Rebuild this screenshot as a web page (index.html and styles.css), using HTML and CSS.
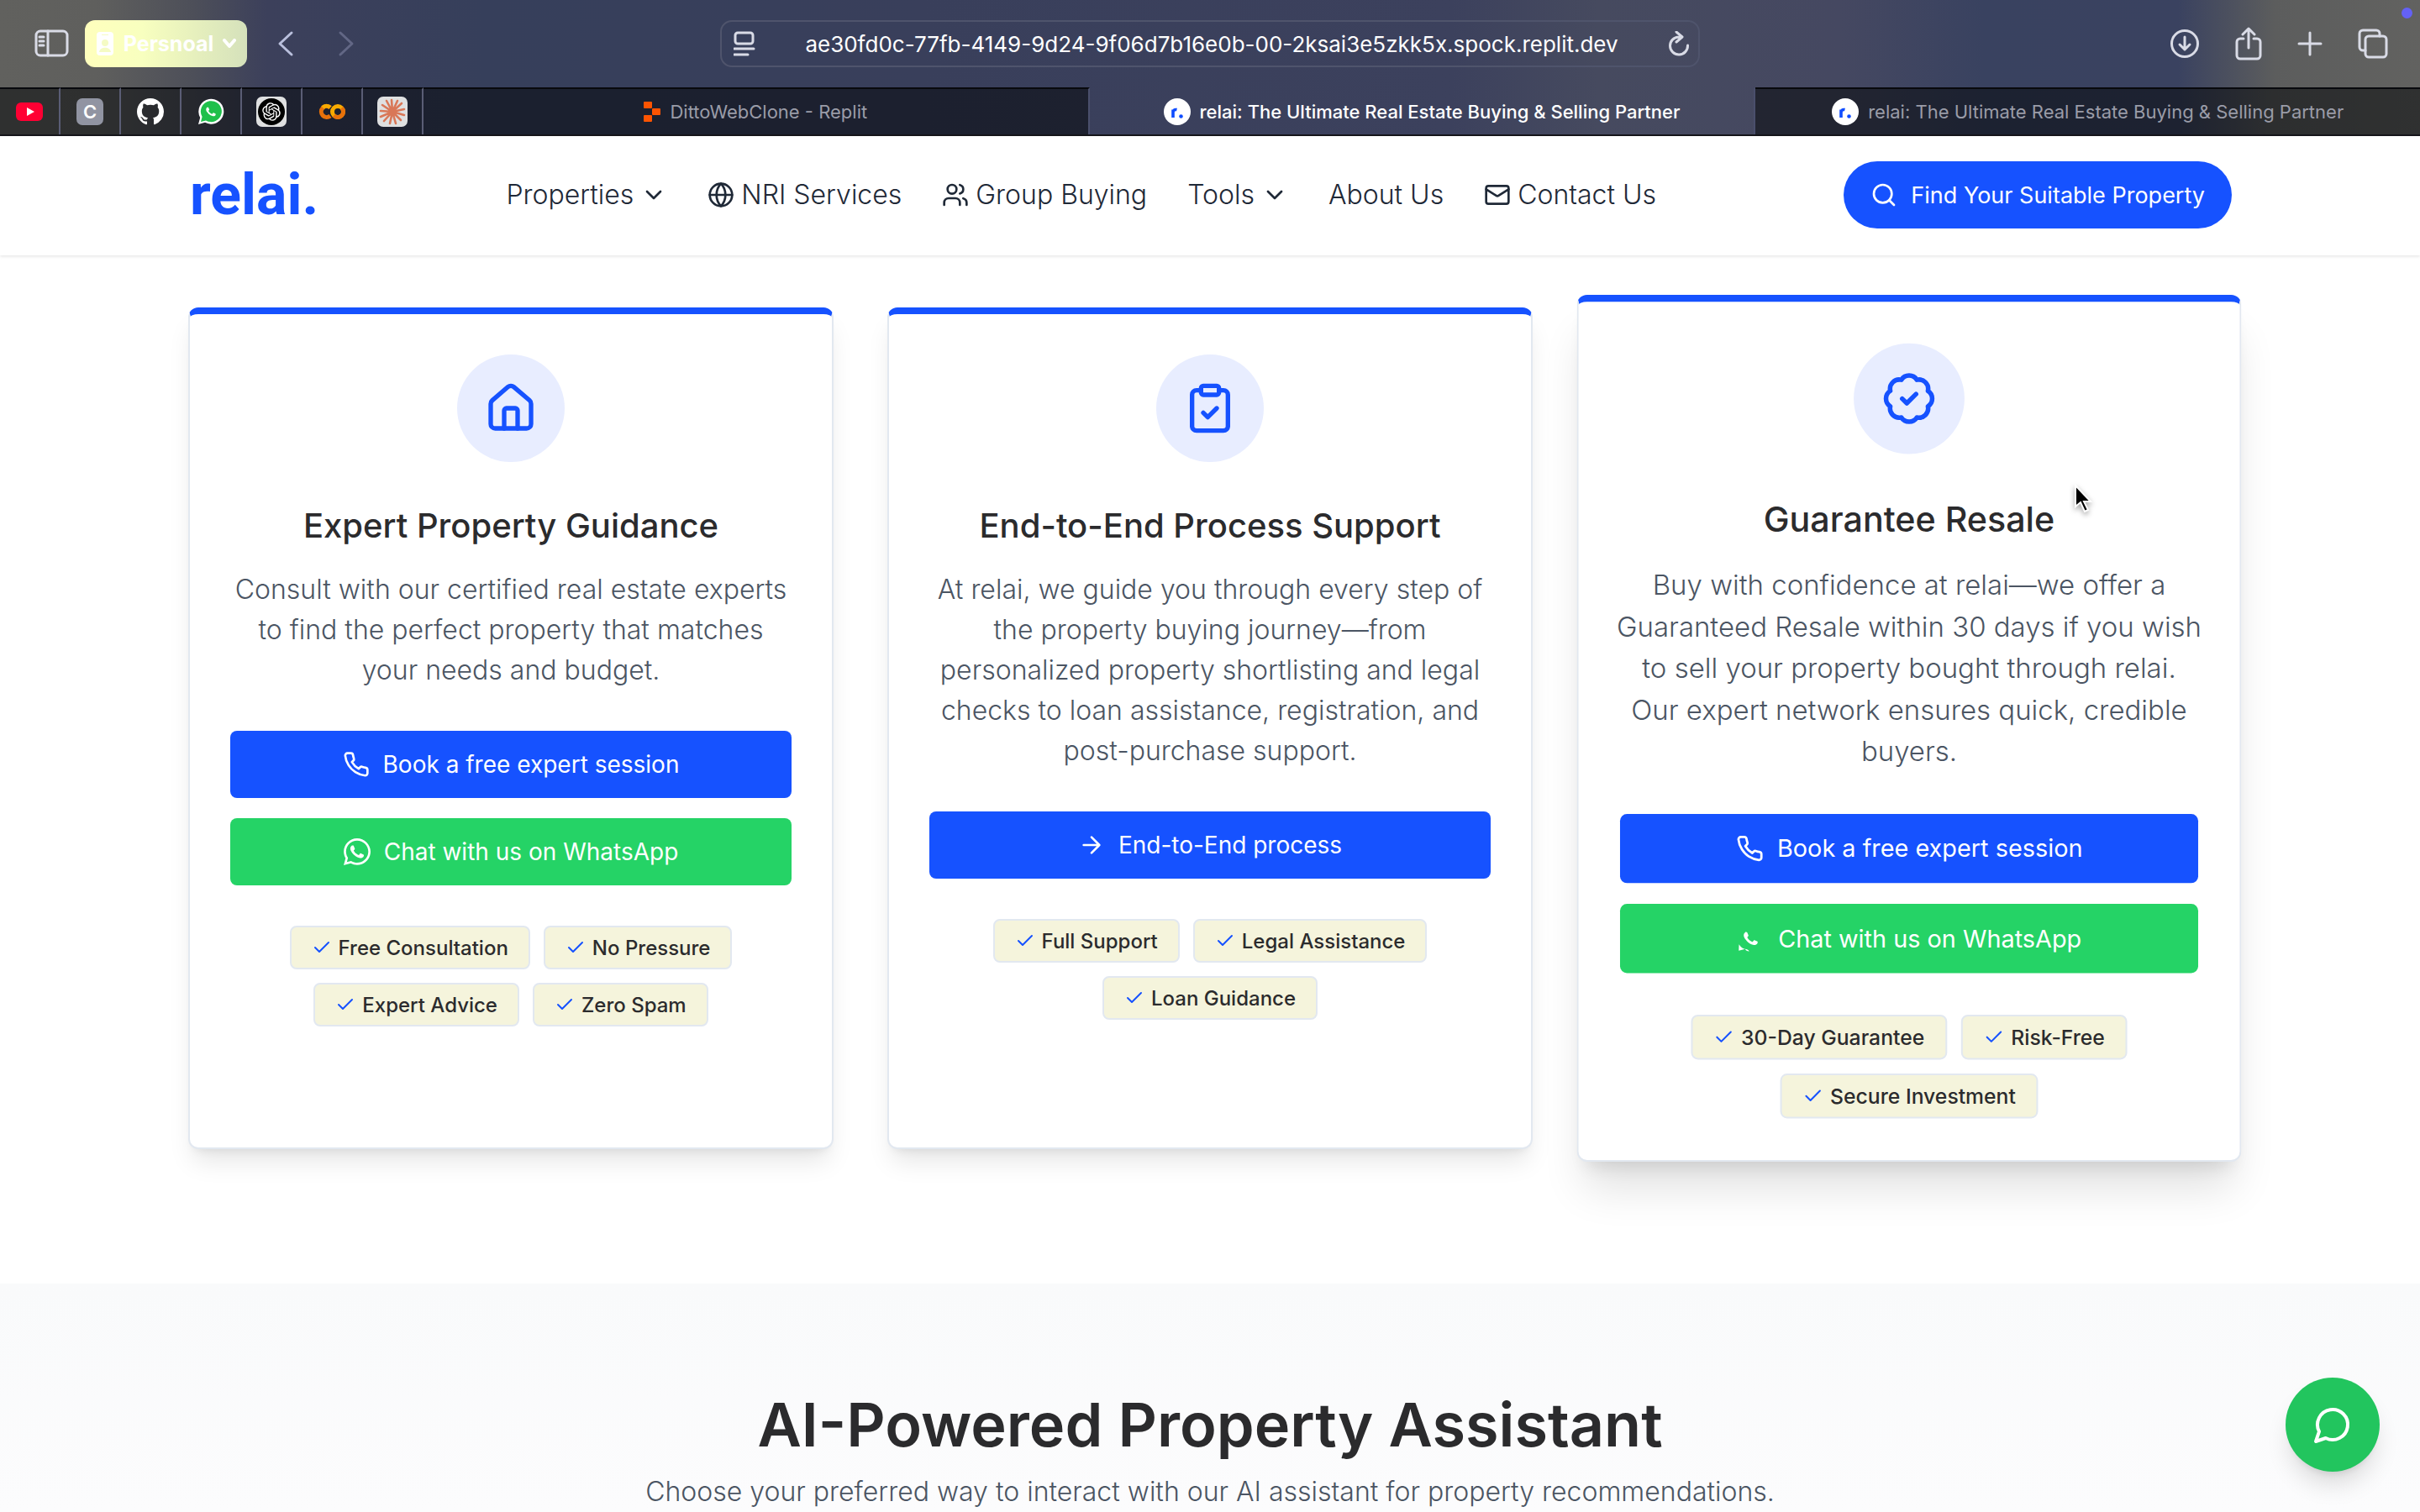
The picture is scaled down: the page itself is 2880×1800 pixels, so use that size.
FILE: index.html
```html
<!DOCTYPE html>
<html lang="en">
<head>
<meta charset="utf-8">
<title>relai: The Ultimate Real Estate Buying &amp; Selling Partner</title>
<link rel="stylesheet" href="styles.css">
</head>
<body>
<svg class="sprite" aria-hidden="true">
  <symbol id="chevron" viewBox="0 0 24 24"><path d="m6 9 6 6 6-6"/></symbol>
  <symbol id="check" viewBox="0 0 24 24"><path d="M20 6 9 17l-5-5"/></symbol>
  <symbol id="phone" viewBox="0 0 24 24"><path d="M22 16.92v3a2 2 0 0 1-2.18 2 19.79 19.79 0 0 1-8.63-3.07 19.5 19.5 0 0 1-6-6 19.79 19.79 0 0 1-3.07-8.67A2 2 0 0 1 4.11 2h3a2 2 0 0 1 2 1.72 12.84 12.84 0 0 0 .7 2.81 2 2 0 0 1-.45 2.11L8.09 9.91a16 16 0 0 0 6 6l1.27-1.27a2 2 0 0 1 2.11-.45 12.84 12.84 0 0 0 2.81.7A2 2 0 0 1 22 16.92z"/></symbol>
  <symbol id="handset" viewBox="0 0 448 512"><path d="M325.1 300.5c-5.5-2.8-32.8-16.2-37.9-18-5.1-1.9-8.800-2.800-12.500 2.800-3.700 5.600-14.300 18-17.600 21.800-3.200 3.700-6.500 4.200-12 1.400-32.600-16.300-54-29.100-75.500-66-5.700-9.800 5.700-9.100 16.300-30.300 1.800-3.700.9-6.900-.5-9.700-1.400-2.800-12.500-30.100-17.100-41.200-4.500-10.800-9.100-9.300-12.500-9.300-3.200-.2-6.900-.2-10.600-.2-3.700 0-9.700 1.400-14.800 6.900-5.100 5.600-19.400 19-19.400 46.300 0 27.300 19.900 53.700 22.600 57.400 2.800 3.700 39.100 59.700 94.800 83.800 35.200 15.200 49 16.500 66.600 13.900 10.700-1.600 32.800-13.400 37.400-26.400 4.600-13 4.600-24.100 3.200-26.400-1.300-2.500-5-3.900-10.500-6.600z"/></symbol>
  <symbol id="relai-mark" viewBox="0 0 32 32"><circle cx="16" cy="16" r="16" fill="#fff"/><path d="M11 23V13.500M11 17c0-2.500 1.800-4 4.500-3.400" fill="none" stroke="#0f4dff" stroke-width="3.600"/><circle cx="20.500" cy="21.500" r="2.300" fill="#0f4dff"/></symbol>
</svg>

<header class="browser">
  <div class="toolbar">
    <div class="tools-left">
      <button class="tool" aria-label="Show sidebar"><svg width="42" height="34" viewBox="0 0 42 34"><rect x="2" y="2" width="37" height="29" rx="5"/><path d="M16 2v29M6 9h5M6 14h5M6 19h5"/></svg></button>
      <button class="profile"><svg width="22" height="30" viewBox="0 0 22 30"><rect x="1" y="1" width="20" height="28" rx="4" fill="#fff"/><circle cx="11" cy="14" r="4" fill="#f5fbc4"/><path d="M4 25c1-7 13-7 14 0zM7 4h8v1H7z" fill="#f5fbc4"/></svg>Persnoal<svg class="line" width="16" height="12" viewBox="0 0 16 12"><path d="m2 2 6 7 6-7"/></svg></button>
      <button class="tool back" aria-label="Back"><svg width="20" height="32" viewBox="0 0 20 32"><path d="M17 3 3 16l14 13"/></svg></button>
      <button class="tool forward" aria-label="Forward"><svg width="20" height="32" viewBox="0 0 20 32"><path d="m3 3 14 13L3 29"/></svg></button>
    </div>
    <div class="address">
      <svg class="tool" width="26" height="30" viewBox="0 0 26 30"><rect x="2" y="2" width="21" height="13" rx="3"/><path d="M1 21h23M1 28h16"/></svg>
      <input type="text" aria-label="Address" value="ae30fd0c-77fb-4149-9d24-9f06d7b16e0b-00-2ksai3e5zkk5x.spock.replit.dev">
      <button class="tool" aria-label="Reload"><svg width="26" height="30" viewBox="0 0 26 30"><path d="M13 7A10.500 10.500 0 1 0 23.500 17M10 1l7 6-7 6"/></svg></button>
    </div>
    <div class="tools-right">
      <button class="tool" aria-label="Downloads"><svg width="36" height="36" viewBox="0 0 36 36"><circle cx="18" cy="18" r="15.500"/><path d="M18 10v15M12 19l6 6 6-6"/></svg></button>
      <button class="tool" aria-label="Share"><svg width="34" height="40" viewBox="0 0 34 40"><path d="M11 14H7a4 4 0 0 0-4 4v16a4 4 0 0 0 4 4h20a4 4 0 0 0 4-4V18a4 4 0 0 0-4-4h-4M17 25V3M10 9l7-7 7 7"/></svg></button>
      <button class="tool" aria-label="New tab"><svg width="30" height="30" viewBox="0 0 30 30"><path d="M15 2v26M2 15h26"/></svg></button>
      <button class="tool" aria-label="Tab overview"><svg width="38" height="38" viewBox="0 0 38 38"><rect x="10" y="10" width="25" height="25" rx="4"/><path d="M10 27H7a4 4 0 0 1-4-4V7a4 4 0 0 1 4-4h16a4 4 0 0 1 4 4v3"/></svg></button>
    </div>
    <span class="dot"></span>
  </div>
  <nav class="tabs" aria-label="Tabs">
    <a class="pin" href="#" aria-label="YouTube"><svg width="32" height="22" viewBox="0 0 32 22"><rect width="32" height="22" rx="6" fill="#ff0033"/><path d="m13 6 9 5-9 5z" fill="#fff"/></svg></a>
    <a class="pin" href="#"><span class="letter">C</span></a>
    <a class="pin" href="#" aria-label="GitHub"><svg width="32" height="32" viewBox="0 0 16 16"><path fill="#fff" d="M8 0C3.580 0 0 3.580 0 8c0 3.540 2.290 6.530 5.470 7.590.4.070.55-.17.55-.38 0-.19-.01-.82-.01-1.490-2.010.37-2.530-.49-2.690-.94-.09-.23-.48-.94-.82-1.130-.28-.15-.68-.52-.01-.53.63-.01 1.080.58 1.230.82.72 1.210 1.870.87 2.330.66.07-.52.28-.87.51-1.070-1.780-.2-3.640-.89-3.640-3.950 0-.87.31-1.590.82-2.150-.08-.2-.36-1.020.08-2.120 0 0 .67-.21 2.200.82.64-.18 1.320-.27 2-.27s1.360.09 2 .27c1.530-1.040 2.200-.82 2.200-.82.44 1.100.16 1.920.08 2.120.51.56.82 1.270.82 2.150 0 3.070-1.870 3.750-3.650 3.950.29.25.54.73.54 1.480 0 1.070-.01 1.930-.01 2.200 0 .21.15.46.55.38A8.010 8.010 0 0 0 16 8c0-4.420-3.580-8-8-8z"/></svg></a>
    <a class="pin" href="#" aria-label="WhatsApp"><svg width="32" height="32" viewBox="0 0 32 32"><path d="M1 31l2.200-8A15 15 0 1 1 9 28.800z" fill="#fff"/><path d="M4 28l1.600-6A12.500 12.500 0 1 1 10 26.400z" fill="#1fc04b"/><use href="#handset" x="4" y="3" width="24" height="26" fill="#fff"/></svg></a>
    <a class="pin" href="#" aria-label="ChatGPT"><span class="tile"><svg width="36" height="36" viewBox="0 0 36 36"><circle cx="18" cy="18" r="16" fill="#000"/><g transform="translate(7.200 7.200) scale(.9)"><path fill="#fff" d="M22.282 9.821a5.985 5.985 0 0 0-.516-4.911 6.046 6.046 0 0 0-6.510-2.900A6.065 6.065 0 0 0 4.981 4.182a5.985 5.985 0 0 0-3.998 2.900 6.046 6.046 0 0 0 .743 7.097 5.980 5.980 0 0 0 .511 4.911 6.051 6.051 0 0 0 6.515 2.900A5.985 5.985 0 0 0 13.260 24a6.056 6.056 0 0 0 5.772-4.206 5.989 5.989 0 0 0 3.998-2.900 6.056 6.056 0 0 0-.748-7.073zm-9.022 12.608a4.476 4.476 0 0 1-2.876-1.041l.142-.080 4.778-2.758a.795.795 0 0 0 .393-.681v-6.737l2.020 1.169a.071.071 0 0 1 .038.052v5.583a4.504 4.504 0 0 1-4.495 4.494zm-9.661-4.125a4.471 4.471 0 0 1-.535-3.014l.142.085 4.783 2.758a.771.771 0 0 0 .781 0l5.843-3.369v2.332a.080.080 0 0 1-.033.062L9.740 19.950a4.499 4.499 0 0 1-6.141-1.646zM2.341 7.896a4.485 4.485 0 0 1 2.366-1.973V11.600a.766.766 0 0 0 .388.677l5.814 3.354-2.020 1.169a.076.076 0 0 1-.071 0l-4.830-2.787A4.504 4.504 0 0 1 2.341 7.872zm16.596 3.856L13.104 8.364 15.119 7.200a.076.076 0 0 1 .071 0l4.830 2.791a4.494 4.494 0 0 1-.677 8.104v-5.677a.790.790 0 0 0-.407-.667zm2.011-3.023l-.142-.085-4.774-2.782a.776.776 0 0 0-.785 0L9.409 9.230V6.897a.066.066 0 0 1 .028-.062l4.830-2.787a4.499 4.499 0 0 1 6.680 4.660zM8.307 12.863l-2.020-1.164a.080.080 0 0 1-.038-.057V6.074a4.499 4.499 0 0 1 7.376-3.454l-.142.081L8.704 5.459a.795.795 0 0 0-.393.681zm1.098-2.365l2.602-1.500 2.607 1.500v2.999l-2.597 1.500-2.607-1.500Z"/></g></svg></span></a>
    <a class="pin" href="#" aria-label="Colab"><svg width="32" height="20" viewBox="0 0 32 20" fill="none" stroke-width="5"><path d="M14 5a6.500 6.500 0 1 0 0 10" stroke="#e8710a"/><path d="M5 5a6.500 6.500 0 0 1 9 0" stroke="#f9ab00"/><circle cx="23" cy="10" r="6.500" stroke="#f9ab00"/><path d="M18.400 14.600a6.500 6.500 0 0 0 9.200-9.200" stroke="#e8710a"/></svg></a>
    <a class="pin" href="#" aria-label="Claude"><span class="tile"><svg width="36" height="36" viewBox="0 0 36 36" stroke="#d97757" stroke-width="2.600" stroke-linecap="round"><path d="M18 18 17 4M18 18l6-13M18 18 29 8M18 18l14-3M18 18l14 4M18 18l10 10M18 18l4 14M18 18l-3 14M18 18 8 29M18 18 4 24M18 18 4 17M18 18 6 10M18 18 11 5"/></svg></span></a>
    <a class="tab" href="#"><svg width="20" height="24" viewBox="0 0 20 24" fill="#fd5402"><rect width="10" height="8" rx="1"/><rect x="10" y="8" width="10" height="8" rx="1"/><rect y="16" width="10" height="8" rx="1"/></svg>DittoWebClone - Replit</a>
    <a class="tab active" href="#"><svg width="32" height="32"><use href="#relai-mark"/></svg>relai: The Ultimate Real Estate Buying &amp; Selling Partner</a>
    <a class="tab" href="#"><svg width="32" height="32"><use href="#relai-mark"/></svg>relai: The Ultimate Real Estate Buying &amp; Selling Partner</a>
  </nav>
</header>

<div class="page">
  <header class="site-header">
    <a class="logo" href="#">relai.</a>
    <nav class="menu" aria-label="Main">
      <a href="#">Properties<svg class="icon"><use href="#chevron"/></svg></a>
      <a href="#"><svg class="icon" viewBox="0 0 24 24"><circle cx="12" cy="12" r="10"/><path d="M12 2a14.500 14.500 0 0 0 0 20 14.500 14.500 0 0 0 0-20M2 12h20"/></svg>NRI Services</a>
      <a href="#"><svg class="icon" viewBox="0 0 24 24"><path d="M16 21v-2a4 4 0 0 0-4-4H6a4 4 0 0 0-4 4v2"/><circle cx="9" cy="7" r="4"/><path d="M22 21v-2a4 4 0 0 0-3-3.870M16 3.130a4 4 0 0 1 0 7.750"/></svg>Group Buying</a>
      <a href="#">Tools<svg class="icon"><use href="#chevron"/></svg></a>
      <a href="#">About Us</a>
      <a href="#"><svg class="icon" viewBox="0 0 24 24"><rect x="2" y="4" width="20" height="16" rx="2"/><path d="m22 7-8.970 5.700a1.940 1.940 0 0 1-2.060 0L2 7"/></svg>Contact Us</a>
    </nav>
    <button class="find"><svg class="icon" viewBox="0 0 24 24"><circle cx="11" cy="11" r="8"/><path d="m21 21-4.300-4.300"/></svg>Find Your Suitable Property</button>
  </header>

  <main>
    <section class="services">
      <article class="card">
        <div class="badge"><svg viewBox="0 0 24 24"><path d="M15 21v-8a1 1 0 0 0-1-1h-4a1 1 0 0 0-1 1v8"/><path d="M3 10a2 2 0 0 1 .709-1.528l7-5.999a2 2 0 0 1 2.582 0l7 5.999A2 2 0 0 1 21 10v9a2 2 0 0 1-2 2H5a2 2 0 0 1-2-2z"/></svg></div>
        <h3>Expert Property Guidance</h3>
        <p>Consult with our certified real estate experts<br>to find the perfect property that matches<br>your needs and budget.</p>
        <div class="actions">
          <button class="action"><svg class="icon"><use href="#phone"/></svg>Book a free expert session</button>
          <button class="action whatsapp"><svg class="solid" viewBox="0 32 448 448"><path fill-rule="evenodd" d="M380.900 97.100C339 55.100 283.200 32 223.900 32c-122.400 0-222 99.600-222 222 0 39.100 10.200 77.300 29.600 111L0 480l117.700-30.900c32.400 17.700 68.900 27 106.100 27h.1c122.300 0 224.100-99.600 224.100-222 0-59.300-25.200-115-67.100-157zm-157 341.600c-33.200 0-65.700-8.900-94-25.700l-6.700-4-69.800 18.300L72 359.200l-4.400-7c-18.500-29.400-28.200-63.300-28.200-98.200 0-101.700 82.800-184.500 184.600-184.500 49.300 0 95.600 19.200 130.400 54.100 34.800 34.900 56.200 81.200 56.100 130.500 0 101.800-84.900 184.600-186.600 184.600z"/><use href="#handset" width="448" height="512"/></svg>Chat with us on WhatsApp</button>
        </div>
        <ul class="tags">
          <li><svg><use href="#check"/></svg>Free Consultation</li>
          <li><svg><use href="#check"/></svg>No Pressure</li>
          <li><svg><use href="#check"/></svg>Expert Advice</li>
          <li><svg><use href="#check"/></svg>Zero Spam</li>
        </ul>
      </article>

      <article class="card">
        <div class="badge"><svg viewBox="0 0 24 24"><rect x="8" y="2" width="8" height="4" rx="1"/><path d="M16 4h2a2 2 0 0 1 2 2v14a2 2 0 0 1-2 2H6a2 2 0 0 1-2-2V6a2 2 0 0 1 2-2h2"/><path d="m9 14 2 2 4-4"/></svg></div>
        <h3>End-to-End Process Support</h3>
        <p>At relai, we guide you through every step of<br>the property buying journey—from<br>personalized property shortlisting and legal<br>checks to loan assistance, registration, and<br>post-purchase support.</p>
        <div class="actions">
          <button class="action"><svg class="icon" viewBox="0 0 24 24"><path d="M5 12h14M12 5l7 7-7 7"/></svg>End-to-End process</button>
        </div>
        <ul class="tags">
          <li><svg><use href="#check"/></svg>Full Support</li>
          <li><svg><use href="#check"/></svg>Legal Assistance</li>
          <li><svg><use href="#check"/></svg>Loan Guidance</li>
        </ul>
      </article>

      <article class="card raised">
        <div class="badge"><svg viewBox="0 0 24 24"><path d="M3.850 8.620a4 4 0 0 1 4.780-4.770 4 4 0 0 1 6.740 0 4 4 0 0 1 4.780 4.780 4 4 0 0 1 0 6.740 4 4 0 0 1-4.770 4.780 4 4 0 0 1-6.750 0 4 4 0 0 1-4.780-4.770 4 4 0 0 1 0-6.760Z"/><path d="m9 12 2 2 4-4"/></svg></div>
        <h3>Guarantee Resale</h3>
        <p>Buy with confidence at relai—we offer a<br>Guaranteed Resale within 30 days if you wish<br>to sell your property bought through relai.<br>Our expert network ensures quick, credible<br>buyers.</p>
        <div class="actions">
          <button class="action"><svg class="icon"><use href="#phone"/></svg>Book a free expert session</button>
          <button class="action whatsapp"><svg class="solid" viewBox="0 32 448 448"><use href="#handset" width="448" height="512"/><path d="M34 350 30 452l104-28c-34-6-70-26-100-74zM134 424c30 2 50 12 66 38-30 2-56-12-66-38z"/></svg>Chat with us on WhatsApp</button>
        </div>
        <ul class="tags">
          <li><svg><use href="#check"/></svg>30-Day Guarantee</li>
          <li><svg><use href="#check"/></svg>Risk-Free</li>
          <li><svg><use href="#check"/></svg>Secure Investment</li>
        </ul>
      </article>
    </section>

    <section class="assistant">
      <h2>AI-Powered Property Assistant</h2>
      <p>Choose your preferred way to interact with our AI assistant for property recommendations.</p>
    </section>
  </main>
</div>

<button class="chat" aria-label="Chat"><svg viewBox="0 0 24 24"><path d="M7.900 20A9 9 0 1 0 4 16.100L2 22Z"/></svg></button>
<svg class="pointer" width="24" height="36" viewBox="0 0 24 36"><path d="M3 2v25l6-5 5 11 4-2-5-10h8z" fill="#000" stroke="#fff" stroke-width="2"/></svg>
</body>
</html>
```
FILE: styles.css
```css
:root {
  --blue: #1652ff;
  --green: #25d366;
  --ink: #1f2937;
  --muted: #4b5563;
  --line: #e2e8f0;
  --gutter: 224px;
}

* { box-sizing: border-box; }

body {
  margin: 0;
  height: 100vh;
  display: flex;
  flex-direction: column;
  overflow: hidden;
  font-family: Inter, "Liberation Sans", sans-serif;
  color: var(--ink);
  background: #fff;
}

h2, h3, p, ul { margin: 0; padding: 0; }
a { color: inherit; text-decoration: none; }
button { border: 0; padding: 0; background: none; font: inherit; color: inherit; }
svg { flex: none; display: block; }
.sprite { position: absolute; width: 0; height: 0; }

.icon {
  width: 32px;
  height: 32px;
  fill: none;
  stroke: currentColor;
  stroke-width: 2;
  stroke-linecap: round;
  stroke-linejoin: round;
}

/* Browser window */
.browser {
  flex: none;
  background: linear-gradient(90deg, #61615e 0, #5f5f5d 4%, #4d4f59 8%, #3c405b 11%, #363f5b 20%, #393f5b 38%, #3c415d 60%, #464a5f 66%, #454861 76%, #394260 82%, #3a4260 90%, #5c5d5d 94%, #626260 100%);
}

.toolbar {
  position: relative;
  display: grid;
  grid-template-columns: 1fr 1166px 1fr;
  align-items: center;
  height: 104px;
}

.tools-left, .tools-right { display: flex; align-items: center; }
.tools-left { padding-left: 41px; gap: 18px; }
.tools-right { justify-content: flex-end; padding-right: 37px; gap: 41px; }

.tool { fill: none; stroke: #d9dbe6; stroke-width: 3; stroke-linecap: round; stroke-linejoin: round; }
.back { margin-left: 18px; stroke: #b9bfdc; }
.forward { margin-left: 34px; stroke: #626785; }

.profile {
  display: flex;
  align-items: center;
  justify-content: center;
  gap: 11px;
  width: 193px;
  height: 56px;
  border-radius: 12px;
  background: linear-gradient(90deg, #ffffbd, #f8ffbf 35%, #d5e1bb);
  color: #fff;
  font-size: 25px;
  font-weight: 700;
}
.line { fill: none; stroke: #fff; stroke-width: 4; stroke-linecap: round; stroke-linejoin: round; }

.address {
  display: flex;
  align-items: center;
  height: 56px;
  padding: 0 10px 0 14px;
  border: 2px solid #4f546c;
  border-radius: 14px;
}
.address input {
  flex: 1;
  min-width: 0;
  border: 0;
  background: none;
  color: #fff;
  font: 400 26px Inter, sans-serif;
  text-align: center;
}

.dot {
  position: absolute;
  top: 9px;
  right: 9px;
  width: 13px;
  height: 13px;
  border-radius: 50%;
  background: #6461f5;
}

.tabs {
  display: flex;
  height: 58px;
  border-bottom: 2px solid #15151a;
}
.pin, .tab {
  display: flex;
  align-items: center;
  justify-content: center;
  border-top: 2px solid #08090d;
  background: rgb(4 6 8 / 53%);
}
.pin { width: 72px; border-right: 2px solid #5a5d75; }
.tab {
  flex: 1;
  gap: 11px;
  border-right: 2px solid #4a4f6c;
  color: #9a9ca8;
  font-size: 22px;
}
.tab:last-child { border-right: 0; }
.active { border-top-color: transparent; background: none; color: #fff; font-weight: 500; }
.letter, .tile { display: grid; place-items: center; border-radius: 7px; }
.letter { width: 32px; height: 32px; background: #9194a2; color: #fff; font-size: 22px; font-weight: 600; }
.tile { width: 36px; height: 36px; background: #dfe0e1; }

/* Site */
.page {
  flex: 1;
  min-height: 0;
  display: flex;
  flex-direction: column;
  overflow: hidden;
}

.site-header {
  display: flex;
  align-items: center;
  justify-content: space-between;
  padding: 30px var(--gutter) 32px;
  box-shadow: 0 1px 4px rgb(0 0 0 / 12%);
}
.logo {
  font: 700 68px/80px Roboto, sans-serif;
  color: var(--blue);
  padding-left: 2px;
}
.menu { display: flex; gap: 48px; font-size: 32px; font-weight: 300; line-height: 48px; }
.menu a { display: flex; align-items: center; gap: 8px; }
.find {
  display: flex;
  align-items: center;
  gap: 16px;
  height: 80px;
  padding: 0 32px;
  border-radius: 40px;
  background: var(--blue);
  color: #fff;
  font-size: 27px;
}

main { flex: 1; display: flex; flex-direction: column; }

.services {
  display: grid;
  grid-template-columns: repeat(3, minmax(0, 1fr));
  gap: 64px;
  padding: 62px var(--gutter) 160px;
}
.card {
  display: flex;
  flex-direction: column;
  align-items: center;
  padding: 48px;
  border: 2px solid var(--line);
  border-top: 8px solid var(--blue);
  border-radius: 12px;
  background: #fff;
  text-align: center;
  box-shadow: 0 20px 30px -6px rgb(0 0 0 / 10%), 0 8px 12px -8px rgb(0 0 0 / 10%);
}
.raised {
  transform: scale(1.03);
  box-shadow: 0 40px 50px -10px rgb(0 0 0 / 12%), 0 16px 20px -12px rgb(0 0 0 / 12%);
}
.badge {
  display: grid;
  place-items: center;
  width: 128px;
  height: 128px;
  margin-bottom: 48px;
  border-radius: 50%;
  background: #e8edff;
}
.badge svg { width: 64px; height: 64px; fill: none; stroke: var(--blue); stroke-width: 2; stroke-linecap: round; stroke-linejoin: round; }
.card h3 { margin-bottom: 24px; font-size: 40px; font-weight: 500; line-height: 56px; color: #2b2b2d; }
.card p { margin-bottom: 48px; font-size: 32px; font-weight: 300; line-height: 48px; color: var(--muted); white-space: nowrap; }
.actions { align-self: stretch; display: grid; gap: 24px; margin-bottom: 48px; }
.action {
  display: flex;
  align-items: center;
  justify-content: center;
  gap: 16px;
  height: 80px;
  border-radius: 8px;
  background: var(--blue);
  color: #fff;
  font-size: 28px;
}
.whatsapp { background: var(--green); }
.solid { width: 32px; height: 32px; fill: #fff; }
.tags { display: flex; flex-wrap: wrap; justify-content: center; gap: 16px; list-style: none; }
.tags li {
  display: flex;
  align-items: center;
  gap: 8px;
  height: 52px;
  padding: 0 24px;
  border: 2px solid var(--line);
  border-radius: 8px;
  background: #f5f4dc;
  color: #2b2b2d;
  font-size: 24px;
  font-weight: 500;
}
.tags svg { width: 24px; height: 24px; fill: none; stroke: var(--blue); stroke-width: 2; stroke-linecap: round; stroke-linejoin: round; }

.assistant {
  flex: 1;
  padding-top: 128px;
  background: linear-gradient(#f9fafb, #fcfcfd 270px);
  text-align: center;
}
.assistant h2 { margin-bottom: 16px; font-size: 72px; font-weight: 600; line-height: 80px; color: #2b2b2d; }
.assistant p { font-size: 32px; font-weight: 300; line-height: 48px; color: var(--muted); }

/* Floating over the page */
.chat {
  position: fixed;
  right: 48px;
  bottom: 48px;
  display: grid;
  place-items: center;
  width: 112px;
  height: 112px;
  border-radius: 50%;
  background: #22c55e;
  box-shadow: 0 20px 30px -6px rgb(0 0 0 / 14%), 0 8px 12px -8px rgb(0 0 0 / 14%);
}
.chat svg { width: 48px; height: 48px; fill: none; stroke: #fff; stroke-width: 2; stroke-linecap: round; stroke-linejoin: round; }
.pointer { position: fixed; left: 2467px; top: 576px; filter: drop-shadow(0 3px 3px rgb(0 0 0 / 35%)); }
```
